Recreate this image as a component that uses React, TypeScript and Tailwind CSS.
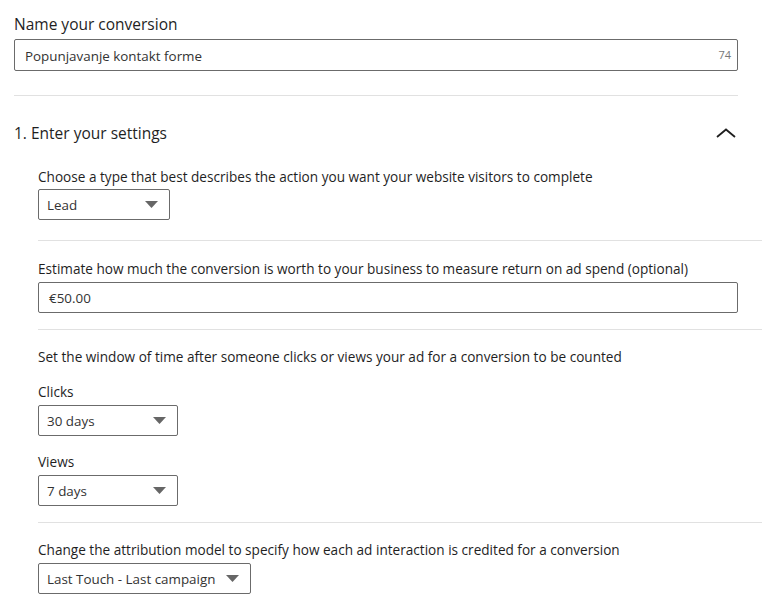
import React from 'react';

const Caret = () => (
  <svg width="13" height="7" viewBox="0 0 13 7" className="shrink-0">
    <path d="M0 0h13L6.5 7z" fill="#666666" />
  </svg>
);

const Select = ({ value, width }: { value: string; width: string }) => (
  <div
    className={`flex items-center justify-between h-[31px] border border-[#6b6b6b] rounded-[2px] pl-[8px] pr-[11px] text-[13.4px] text-[#333] ${width}`}>
    <span className="pt-[2px]">{value}</span>
    <Caret />
  </div>
);

const Divider = () => <div className="h-px bg-[#e1e1e1]" />;

export default function App() {
  return (
    <div
      className="w-[771px] h-[608px] overflow-hidden bg-white text-[#1f1f1f]"
      style={{ fontFamily: '"Open Sans", sans-serif' }}>
      <div className="pl-[14px] pr-[33px] pt-[14px]">
        <h3 className="text-[15.5px] leading-[20px]">Name your conversion</h3>
        <div className="mt-[5px] h-[32px] border border-[#6b6b6b] rounded-[2px] flex items-center justify-between pl-[10px] pr-[6px]">
          <span className="pt-[2px] text-[13.4px] text-[#333]">Popunjavanje kontakt forme</span>
          <span className="pt-[1px] text-[11px] text-[#777]">74</span>
        </div>
        <div className="mt-[24px]">
          <Divider />
        </div>
        <div className="mt-[27px] flex items-center justify-between">
          <h3 className="text-[15.5px] leading-[20px]">1. Enter your settings</h3>
          <svg width="20" height="10" viewBox="0 0 20 10" className="mr-[2px]">
            <path d="M1 9L10 1.5L19 9" fill="none" stroke="#1f1f1f" strokeWidth="1.8" />
          </svg>
        </div>
      </div>

      <div className="pl-[38px] pr-[9px] text-[13.6px]">
        <div className="pt-[25px] pb-[20px]">
          <p className="leading-[18px]">
            Choose a type that best describes the action you want your website visitors to complete
          </p>
          <div className="mt-[3px]">
            <Select value="Lead" width="w-[132px]" />
          </div>
        </div>
        <Divider />

        <div className="pt-[19px] pb-[16px]">
          <p className="leading-[18px]">
            Estimate how much the conversion is worth to your business to measure return on ad spend (optional)
          </p>
          <div className="mt-[4px] mr-[24px] h-[31px] border border-[#6b6b6b] rounded-[2px] flex items-center pl-[10px] text-[13.4px] text-[#333]">
            <span className="pt-[2px]">€50.00</span>
          </div>
        </div>
        <Divider />

        <div className="pt-[18px] pb-[16px]">
          <p className="leading-[18px]">
            Set the window of time after someone clicks or views your ad for a conversion to be counted
          </p>
          <p className="mt-[17px] leading-[18px]">Clicks</p>
          <div className="mt-[4px]">
            <Select value="30 days" width="w-[140px]" />
          </div>
          <p className="mt-[17px] leading-[18px]">Views</p>
          <div className="mt-[4px]">
            <Select value="7 days" width="w-[140px]" />
          </div>
        </div>
        <Divider />

        <div className="pt-[18px]">
          <p className="leading-[18px]">
            Change the attribution model to specify how each ad interaction is credited for a conversion
          </p>
          <div className="mt-[4px]">
            <Select value="Last Touch - Last campaign" width="w-[213px]" />
          </div>
        </div>
      </div>
    </div>
  );
}
